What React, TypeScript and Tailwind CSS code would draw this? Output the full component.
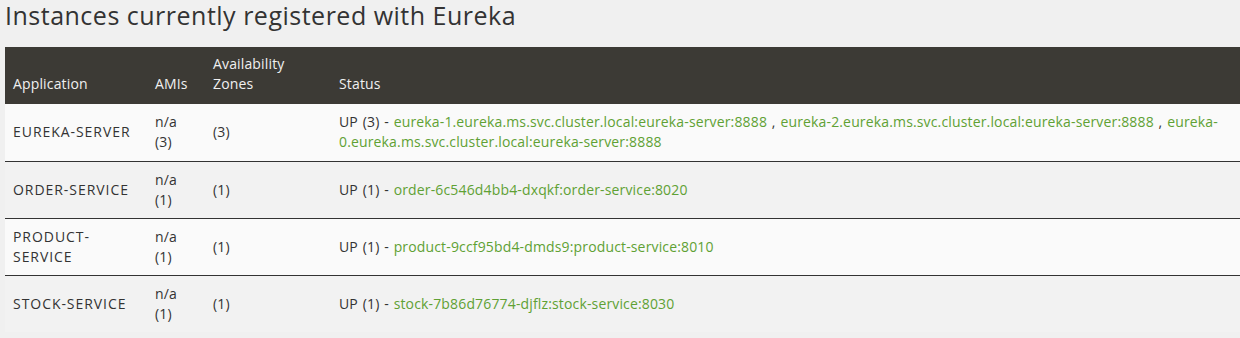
import React from "react";

type Row = { app: string; ami: string; az: string; up: string; links: string[] };

const rows: Row[] = [
  {
    app: "EUREKA-SERVER",
    ami: "(3)",
    az: "(3)",
    up: "UP (3) - ",
    links: [
      "eureka-1.eureka.ms.svc.cluster.local:eureka-server:8888",
      "eureka-2.eureka.ms.svc.cluster.local:eureka-server:8888",
      "eureka-0.eureka.ms.svc.cluster.local:eureka-server:8888",
    ],
  },
  { app: "ORDER-SERVICE", ami: "(1)", az: "(1)", up: "UP (1) - ", links: ["order-6c546d4bb4-dxqkf:order-service:8020"] },
  { app: "PRODUCT-SERVICE", ami: "(1)", az: "(1)", up: "UP (1) - ", links: ["product-9ccf95bd4-dmds9:product-service:8010"] },
  { app: "STOCK-SERVICE", ami: "(1)", az: "(1)", up: "UP (1) - ", links: ["stock-7b86d76774-djflz:stock-service:8030"] },
];

export default function App() {
  return (
    <div className="min-h-[338px] w-[1240px] bg-[#f0f0f0] pl-[5px] text-[#333]" style={{ fontFamily: "'Open Sans', sans-serif" }}>
      <h1 className="text-[25px] leading-[30px] font-medium tracking-[0.5px] text-[#333]">
        Instances currently registered with Eureka
      </h1>
      <table className="mt-[17px] w-[1235px] table-fixed border-collapse text-[14px] leading-[20px] tracking-[0.15px] [word-spacing:1px]">
        <colgroup>
          <col className="w-[142px]" />
          <col className="w-[58px]" />
          <col className="w-[126px]" />
          <col />
        </colgroup>
        <thead>
          <tr className="bg-[#3c3a35] text-[#f0f0f0]">
            <th className="h-[57px] px-2 pt-[6px] pb-[10px] text-left align-bottom font-medium">Application</th>
            <th className="px-2 pt-[6px] pb-[10px] text-left align-bottom font-medium">AMIs</th>
            <th className="px-2 pt-[6px] pb-[10px] text-left align-bottom font-medium">
              Availability
              <br />
              Zones
            </th>
            <th className="px-2 pt-[6px] pb-[10px] text-left align-bottom font-medium">Status</th>
          </tr>
        </thead>
        <tbody>
          {rows.map((r, i) => (
            <tr
              key={r.app}
              className={`${i % 2 === 0 ? "bg-[#fafafa]" : "bg-[#f2f2f2]"} ${i < rows.length - 1 ? "border-b border-[#333]" : ""}`}
            >
              <td className="h-[57px] px-2 py-2 align-middle tracking-[0.95px]">{r.app}</td>
              <td className="px-2 py-2 align-middle">
                n/a
                <br />
                {r.ami}
              </td>
              <td className="px-2 py-2 align-middle">{r.az}</td>
              <td className="px-2 py-2 align-middle">
                {r.up}
                {r.links.map((l, j) => (
                  <React.Fragment key={l}>
                    {j > 0 ? " , " : ""}
                    <a className="text-[#5fa134]">{l}</a>
                  </React.Fragment>
                ))}
              </td>
            </tr>
          ))}
        </tbody>
      </table>
    </div>
  );
}
